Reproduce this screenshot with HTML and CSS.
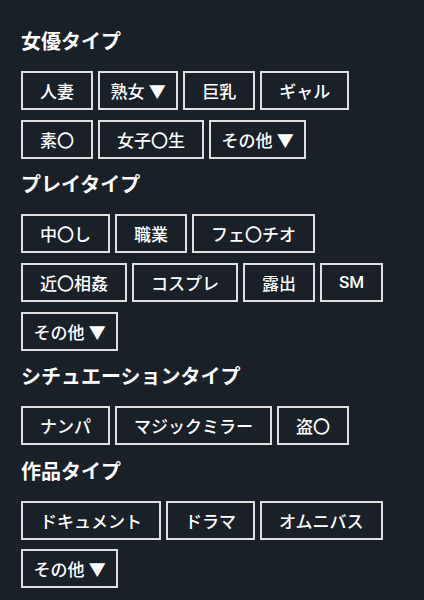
FILE: index.html
```html
<!DOCTYPE html>
<html lang="ja">
<head>
<meta charset="utf-8">
<link rel="stylesheet" href="styles.css">
</head>
<body>
<div class="filters">
  <section class="group">
    <h2 class="group-title">女優タイプ</h2>
    <div class="tags">
      <span class="tag">人妻</span>
      <span class="tag tag-more">熟女 ▼</span>
      <span class="tag">巨乳</span>
      <span class="tag">ギャル</span>
      <span class="tag">素〇</span>
      <span class="tag">女子〇生</span>
      <span class="tag tag-more">その他 ▼</span>
    </div>
  </section>
  <section class="group">
    <h2 class="group-title">プレイタイプ</h2>
    <div class="tags">
      <span class="tag">中〇し</span>
      <span class="tag">職業</span>
      <span class="tag">フェ〇チオ</span>
      <span class="tag">近〇相姦</span>
      <span class="tag">コスプレ</span>
      <span class="tag">露出</span>
      <span class="tag">SM</span>
      <span class="tag tag-more">その他 ▼</span>
    </div>
  </section>
  <section class="group">
    <h2 class="group-title">シチュエーションタイプ</h2>
    <div class="tags">
      <span class="tag">ナンパ</span>
      <span class="tag">マジックミラー</span>
      <span class="tag">盗〇</span>
    </div>
  </section>
  <section class="group">
    <h2 class="group-title">作品タイプ</h2>
    <div class="tags">
      <span class="tag">ドキュメント</span>
      <span class="tag">ドラマ</span>
      <span class="tag">オムニバス</span>
      <span class="tag tag-more">その他 ▼</span>
    </div>
  </section>
</div>
</body>
</html>
```

FILE: styles.css
```css
html, body {
  margin: 0;
  padding: 0;
  background: #1a2028;
}
body {
  font-family: Roboto, "Noto Sans CJK JP", sans-serif;
  color: #fff;
}
.filters {
  padding: 26px 21px 0;
}
.group {
  margin-bottom: 10.5px;
}
.group-title {
  margin: 0 0 15px;
  font-size: 20px;
  line-height: 30px;
  font-weight: 700;
  font-family: "Noto Sans CJK JP", sans-serif;
}
.tags {
  display: flex;
  flex-wrap: wrap;
  gap: 9.7px 5px;
}
.tag {
  display: inline-flex;
  align-items: center;
  justify-content: center;
  box-sizing: border-box;
  height: 39px;
  padding: 0 17px;
  border: 2px solid #e0e0e0;
  font-size: 17px;
  font-weight: 500;
  white-space: nowrap;
}
.tag-more {
  padding: 0 10.5px;
}
```
